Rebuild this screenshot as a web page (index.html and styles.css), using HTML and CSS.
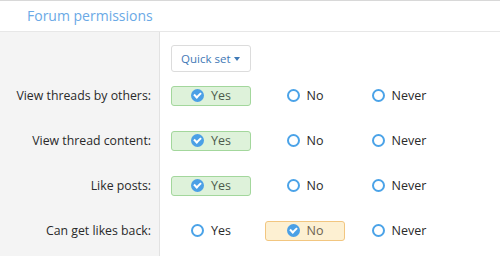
FILE: index.html
```html
<!DOCTYPE html>
<html lang="en">
<head>
    <meta charset="UTF-8">
    <title>Forum permissions</title>
    <link rel="stylesheet" href="styles.css">
</head>
<body>
    <div class="block">
        <h2 class="block-header">Forum permissions</h2>
        <div class="form-body">
            <div class="form-label"></div>
            <div class="form-input quick-row">
                <button class="quick-set">Quick set <span class="caret"></span></button>
            </div>

            <div class="form-label">View threads by others:</div>
            <div class="form-input">
                <label class="choice yes selected"><span class="icon-check"></span>Yes</label>
                <label class="choice"><span class="icon-radio"></span>No</label>
                <label class="choice"><span class="icon-radio"></span>Never</label>
            </div>

            <div class="form-label">View thread content:</div>
            <div class="form-input">
                <label class="choice yes selected"><span class="icon-check"></span>Yes</label>
                <label class="choice"><span class="icon-radio"></span>No</label>
                <label class="choice"><span class="icon-radio"></span>Never</label>
            </div>

            <div class="form-label">Like posts:</div>
            <div class="form-input">
                <label class="choice yes selected"><span class="icon-check"></span>Yes</label>
                <label class="choice"><span class="icon-radio"></span>No</label>
                <label class="choice"><span class="icon-radio"></span>Never</label>
            </div>

            <div class="form-label">Can get likes back:</div>
            <div class="form-input">
                <label class="choice"><span class="icon-radio"></span>Yes</label>
                <label class="choice no selected"><span class="icon-check"></span>No</label>
                <label class="choice"><span class="icon-radio"></span>Never</label>
            </div>

            <div class="form-label filler"></div>
            <div class="form-input filler"></div>
        </div>
    </div>
</body>
</html>
```

FILE: styles.css
```css
body {
    margin: 0;
    font-family: "Open Sans", "Noto Sans", sans-serif;
    background-color: #fff;
    color: #2a2a2a;
}

.block {
    border-top: 1px solid #d8d8d8;
}

.block-header {
    margin: 0;
    height: 30px;
    line-height: 30px;
    padding-left: 27px;
    font-size: 14px;
    font-weight: normal;
    color: #6aa9e6;
    border-bottom: 1px solid #e7e7e7;
}

.form-body {
    display: grid;
    grid-template-columns: 160px 1fr;
}

.form-label {
    background-color: #f4f4f4;
    border-right: 1px solid #e2e2e2;
    height: 45px;
    display: flex;
    align-items: center;
    justify-content: flex-end;
    padding-right: 8px;
    font-size: 12.3px;
    color: #2a2a2a;
}

.form-input {
    height: 45px;
    display: flex;
    align-items: center;
    gap: 14px;
    padding-left: 11px;
}

.form-body > .form-label:first-child,
.quick-row {
    height: 41px;
}

.quick-row {
    align-items: flex-start;
    padding-top: 13px;
    box-sizing: border-box;
}

.filler {
    height: 60px;
}

.quick-set {
    height: 27px;
    padding: 0 10px 0 9px;
    background-color: #fff;
    border: 1px solid #dcdcdc;
    border-radius: 3px;
    font-family: inherit;
    font-size: 11.5px;
    color: #3f79b6;
    display: flex;
    align-items: center;
    gap: 4px;
}

.caret {
    width: 0;
    height: 0;
    border-left: 3.5px solid transparent;
    border-right: 3.5px solid transparent;
    border-top: 4px solid #3f79b6;
}

.choice {
    width: 80px;
    height: 20px;
    box-sizing: border-box;
    display: flex;
    align-items: center;
    justify-content: center;
    gap: 7px;
    font-size: 12.5px;
    border: 1px solid transparent;
    border-radius: 3px;
    color: #2a2a2a;
}

.choice.yes.selected {
    background-color: #def2da;
    border-color: #a3d79c;
    color: #4c5a4c;
}

.choice.no.selected {
    background-color: #fdf0d2;
    border-color: #f2c680;
    color: #6c6250;
}

.icon-radio {
    width: 13px;
    height: 13px;
    box-sizing: border-box;
    border: 2px solid #4ba3e8;
    border-radius: 50%;
}

.icon-check {
    width: 13px;
    height: 13px;
    border-radius: 50%;
    background-color: #4ba0e6;
    position: relative;
}

.icon-check::after {
    content: "";
    position: absolute;
    left: 4px;
    top: 2px;
    width: 3px;
    height: 5px;
    border-right: 2px solid #fff;
    border-bottom: 2px solid #fff;
    transform: rotate(45deg);
}
```
